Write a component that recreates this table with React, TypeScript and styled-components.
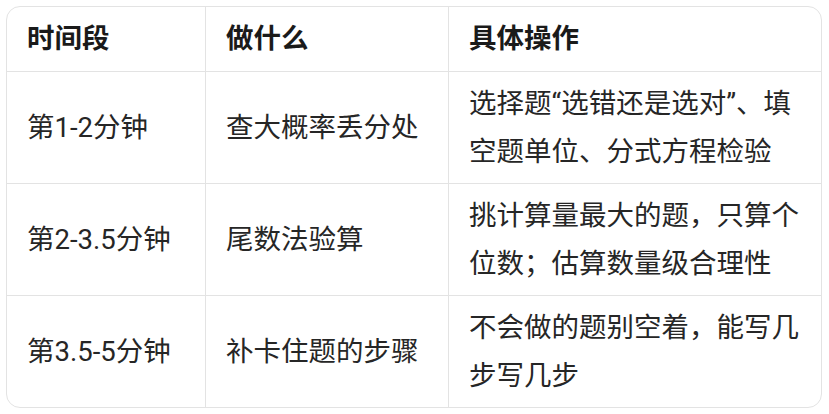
import React from "react";
import styled, { createGlobalStyle } from "styled-components";

const GlobalStyle = createGlobalStyle`
  html, body {
    margin: 0;
    padding: 0;
    background: #ffffff;
  }

  body {
    font-family: Roboto, "Noto Sans CJK SC", sans-serif;
    color: #1f1f1f;
  }
`;

const Page = styled.div`
  padding: 6px 7px 6px 6px;
`;

const Frame = styled.div`
  width: 816px;
  box-sizing: border-box;
  border: 1px solid #e3e3e3;
  border-radius: 14px;
  overflow: hidden;
  background: #ffffff;
`;

const Table = styled.table`
  width: 100%;
  border-collapse: separate;
  border-spacing: 0;
  table-layout: fixed;
  font-size: 27.5px;
  line-height: 48px;
`;

const HeadCell = styled.th<{ $last?: boolean }>`
  text-align: left;
  font-weight: 700;
  padding: 8px ${(p) => (p.$last ? "16px" : "20px")} 8px 20px;
  border-bottom: 1px solid #e3e3e3;
  border-right: ${(p) => (p.$last ? "none" : "1px solid #e3e3e3")};
  color: #1a1a1a;
  vertical-align: middle;
  white-space: nowrap;
`;

const BodyCell = styled.td<{ $last?: boolean; $lastRow?: boolean }>`
  text-align: left;
  font-weight: 400;
  padding: 7.5px ${(p) => (p.$last ? "16px" : "20px")} 7.5px 20px;
  border-bottom: ${(p) => (p.$lastRow ? "none" : "1px solid #e3e3e3")};
  border-right: ${(p) => (p.$last ? "none" : "1px solid #e3e3e3")};
  color: #262626;
  vertical-align: middle;
  height: 96px;
`;

const headers = ["时间段", "做什么", "具体操作"];

const rows = [
  ["第1-2分钟", "查大概率丢分处", "选择题“选错还是选对”、填空题单位、分式方程检验"],
  ["第2-3.5分钟", "尾数法验算", "挑计算量最大的题，只算个位数；估算数量级合理性"],
  ["第3.5-5分钟", "补卡住题的步骤", "不会做的题别空着，能写几步写几步"],
];

export default function App() {
  return (
    <>
      <GlobalStyle />
      <Page>
        <Frame>
          <Table>
            <colgroup>
              <col style={{ width: 199 }} />
              <col style={{ width: 243 }} />
              <col />
            </colgroup>
            <thead>
              <tr>
                {headers.map((h, i) => (
                  <HeadCell key={h} $last={i === headers.length - 1}>
                    {h}
                  </HeadCell>
                ))}
              </tr>
            </thead>
            <tbody>
              {rows.map((row, r) => (
                <tr key={r}>
                  {row.map((cell, i) => (
                    <BodyCell
                      key={i}
                      $last={i === row.length - 1}
                      $lastRow={r === rows.length - 1}
                    >
                      {cell}
                    </BodyCell>
                  ))}
                </tr>
              ))}
            </tbody>
          </Table>
        </Frame>
      </Page>
    </>
  );
}
